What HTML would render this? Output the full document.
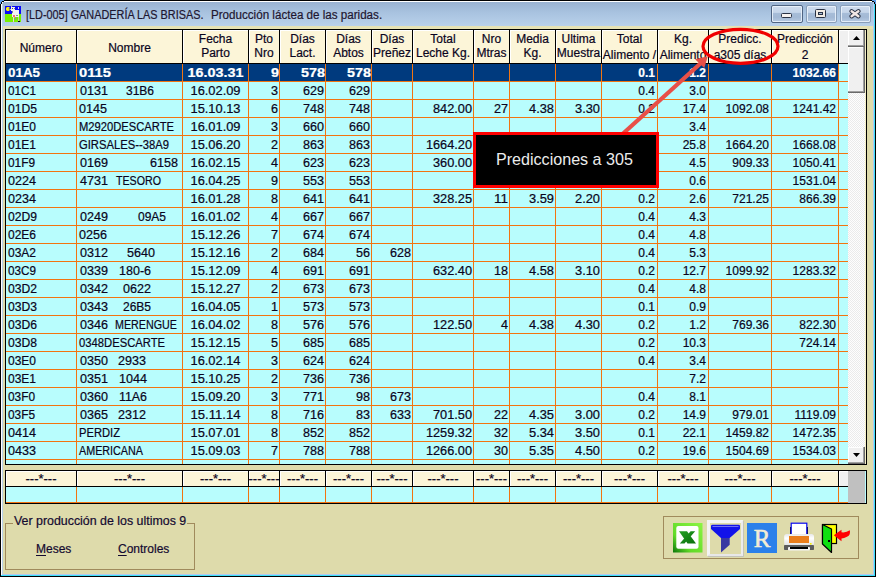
<!DOCTYPE html><html><head><meta charset="utf-8"><style>

*{margin:0;padding:0;box-sizing:border-box}
html,body{width:876px;height:577px;overflow:hidden;background:#dedbab;font-family:"Liberation Sans",sans-serif;position:relative}
.a{position:absolute}
.t{white-space:pre;position:absolute;line-height:14px;-webkit-text-stroke:0.2px currentColor}
.hd{color:#0a0420;font-size:12px}
.dt{color:#140a30;font-size:11.2px}
.da{color:#140a30;font-size:12px}
.sel{color:#fff;font-weight:bold;font-size:12px}
u{text-underline-offset:2px}

</style></head><body>
<div class="a" style="left:0;top:0;width:876px;height:26px;background:linear-gradient(#97b0cf,#a9c3e0 50%,#b9d1ea)"></div>
<div class="a" style="left:0;top:0;width:876px;height:1px;background:#000"></div>
<div class="a" style="left:1;top:1px;left:1px;width:872px;height:1px;background:#fff"></div>
<div class="a" style="left:0;top:0;width:1px;height:577px;background:#000"></div>
<div class="a" style="left:1px;top:1px;width:1px;height:574px;background:#fff"></div>
<div class="a" style="left:2px;top:2px;width:1px;height:572px;background:#b9d1ea"></div>
<div class="a" style="left:873px;top:2px;width:1px;height:573px;background:#b4c8f0"></div>
<div class="a" style="left:874px;top:1px;width:1px;height:575px;background:#3ce0f8"></div>
<div class="a" style="left:875px;top:0;width:1px;height:577px;background:#000"></div>
<div class="a" style="left:2px;top:574px;width:872px;height:1px;background:#b4c8f0"></div>
<div class="a" style="left:1px;top:575px;width:874px;height:1px;background:#3ce0f8"></div>
<div class="a" style="left:0;top:576px;width:876px;height:1px;background:#000"></div>
<div class="a" style="left:0px;top:0px;width:4px;height:1px;background:#5a9ae8"></div>
<div class="a" style="left:0px;top:1px;width:2px;height:1px;background:#5a9ae8"></div>
<div class="a" style="left:0px;top:2px;width:1px;height:2px;background:#5a9ae8"></div>
<div class="a" style="left:2px;top:1px;width:2px;height:1px;background:#000"></div>
<div class="a" style="left:1px;top:2px;width:1px;height:2px;background:#000"></div>
<div class="a" style="left:2px;top:2px;width:1px;height:1px;background:#fff"></div>
<div class="a" style="left:872px;top:0px;width:4px;height:1px;background:#5a9ae8"></div>
<div class="a" style="left:874px;top:1px;width:2px;height:1px;background:#5a9ae8"></div>
<div class="a" style="left:875px;top:2px;width:1px;height:2px;background:#5a9ae8"></div>
<div class="a" style="left:872px;top:1px;width:2px;height:1px;background:#000"></div>
<div class="a" style="left:874px;top:2px;width:1px;height:2px;background:#000"></div>
<div class="a" style="left:3px;top:26px;width:870px;height:3px;background:#e6e2b4"></div>
<svg class="a" style="left:5px;top:6px" width="16" height="16" viewBox="0 0 16 16" shape-rendering="crispEdges">
<rect x="0" y="0" width="16" height="8" fill="#0a0af8"/><rect x="0" y="8" width="16" height="8" fill="#78f000"/>
<path d="M1 2 L2 1 L4 1 L5 2 L3.5 3 L5 3.5 L4 5 L2 5 L1 4 Z" fill="#f8f010" shape-rendering="auto"/>
<rect x="5" y="3" width="2" height="1" fill="#c8c8c8"/>
<rect x="6" y="1" width="4" height="4" fill="#f0f0f0"/><rect x="7" y="2" width="1" height="1" fill="#505050"/><rect x="9" y="2" width="1" height="1" fill="#808080"/>
<rect x="6" y="0" width="1" height="1" fill="#c0c0c0"/><rect x="13" y="1" width="1" height="2" fill="#d0d0d0"/>
<rect x="7" y="4" width="7" height="7" fill="#f4f4f4"/><rect x="7" y="5" width="1" height="2" fill="#8a8a8a"/>
<rect x="11" y="9" width="2" height="1" fill="#909090"/>
<rect x="8" y="9" width="2" height="2" fill="#f07080"/><rect x="9" y="11" width="1" height="1" fill="#f0c020"/>
<rect x="8" y="11" width="1" height="4" fill="#e0e0e0"/><rect x="8" y="15" width="1" height="1" fill="#f0c0d0"/>
<rect x="13" y="11" width="1" height="4" fill="#c0c0c0"/><rect x="13" y="15" width="2" height="1" fill="#101010"/>
<rect x="10" y="11" width="1" height="3" fill="#909090"/>
</svg>
<div class="t" style="left:26px;top:6px;font-size:12px;color:#1e1630;line-height:18px;transform:scaleX(0.905);transform-origin:0 0">[LD-005] GANADERÍA LAS BRISAS.</div>
<div class="t" style="left:210.5px;top:6px;font-size:12px;color:#1e1630;line-height:18px;transform:scaleX(0.968);transform-origin:0 0">Producción láctea de las paridas.</div>
<div class="a" style="left:771px;top:5px;width:32px;height:18px;border:1px solid #4f6482;border-radius:2px;background:linear-gradient(#cfdcee 0,#c6d6ea 40%,#a7bdd8 45%,#a3b9d5 70%,#b6cae2 100%);box-shadow:inset 0 0 0 1px rgba(235,243,252,0.85)"></div>
<div class="a" style="left:781px;top:13px;width:11px;height:5px;background:#f6f2f0;border:1px solid #2a3244;border-radius:1.5px"></div>
<div class="a" style="left:806px;top:5px;width:31px;height:18px;border:1px solid #8a9fba;border-radius:2px;background:linear-gradient(#cfdcee 0,#c6d6ea 40%,#a7bdd8 45%,#a3b9d5 70%,#b6cae2 100%);box-shadow:inset 0 0 0 1px rgba(235,243,252,0.85)"></div>
<div class="a" style="left:815px;top:9px;width:11px;height:9px;background:#f2ece4;border:1.5px solid #2a3244;border-radius:1.5px"></div><div class="a" style="left:818px;top:12px;width:5px;height:3px;background:#a9bdd6;border:1px solid #2a3244"></div>
<div class="a" style="left:840px;top:5px;width:31px;height:18px;border:1px solid #8a9fba;border-radius:2px;background:linear-gradient(#cfdcee 0,#c6d6ea 40%,#a7bdd8 45%,#a3b9d5 70%,#b6cae2 100%);box-shadow:inset 0 0 0 1px rgba(235,243,252,0.85)"></div>
<svg class="a" style="left:848px;top:8px" width="14" height="11" viewBox="0 0 14 11"><path d="M3.6 3.2 L10.4 8.2 M10.4 3.2 L3.6 8.2" stroke="#2a3244" stroke-width="4.4" stroke-linecap="round"/><path d="M3.6 3.2 L10.4 8.2 M10.4 3.2 L3.6 8.2" stroke="#f2e8e6" stroke-width="2.4" stroke-linecap="round"/></svg>
<div class="a" style="left:5px;top:29px;width:862px;height:436px;border:1px solid #000;background:#b8fdfd"></div>
<div class="a" style="left:6px;top:30px;width:832px;height:33px;background:#fcf5d8"></div>
<div class="a" style="left:839px;top:30px;width:9px;height:33px;background:#f0f0f0"></div>
<div class="a" style="left:6px;top:30px;width:842px;height:1px;background:#fff"></div>
<div class="a" style="left:6px;top:63px;width:842px;height:1px;background:#000"></div>
<div class="a" style="left:76px;top:30px;width:1px;height:33px;background:#000"></div>
<div class="a" style="left:77px;top:30px;width:1px;height:33px;background:#fff"></div>
<div class="a" style="left:182px;top:30px;width:1px;height:33px;background:#000"></div>
<div class="a" style="left:183px;top:30px;width:1px;height:33px;background:#fff"></div>
<div class="a" style="left:248px;top:30px;width:1px;height:33px;background:#000"></div>
<div class="a" style="left:249px;top:30px;width:1px;height:33px;background:#fff"></div>
<div class="a" style="left:279px;top:30px;width:1px;height:33px;background:#000"></div>
<div class="a" style="left:280px;top:30px;width:1px;height:33px;background:#fff"></div>
<div class="a" style="left:325px;top:30px;width:1px;height:33px;background:#000"></div>
<div class="a" style="left:326px;top:30px;width:1px;height:33px;background:#fff"></div>
<div class="a" style="left:371px;top:30px;width:1px;height:33px;background:#000"></div>
<div class="a" style="left:372px;top:30px;width:1px;height:33px;background:#fff"></div>
<div class="a" style="left:412px;top:30px;width:1px;height:33px;background:#000"></div>
<div class="a" style="left:413px;top:30px;width:1px;height:33px;background:#fff"></div>
<div class="a" style="left:473px;top:30px;width:1px;height:33px;background:#000"></div>
<div class="a" style="left:474px;top:30px;width:1px;height:33px;background:#fff"></div>
<div class="a" style="left:509px;top:30px;width:1px;height:33px;background:#000"></div>
<div class="a" style="left:510px;top:30px;width:1px;height:33px;background:#fff"></div>
<div class="a" style="left:555px;top:30px;width:1px;height:33px;background:#000"></div>
<div class="a" style="left:556px;top:30px;width:1px;height:33px;background:#fff"></div>
<div class="a" style="left:601px;top:30px;width:1px;height:33px;background:#000"></div>
<div class="a" style="left:602px;top:30px;width:1px;height:33px;background:#fff"></div>
<div class="a" style="left:657px;top:30px;width:1px;height:33px;background:#000"></div>
<div class="a" style="left:658px;top:30px;width:1px;height:33px;background:#fff"></div>
<div class="a" style="left:708px;top:30px;width:1px;height:33px;background:#000"></div>
<div class="a" style="left:709px;top:30px;width:1px;height:33px;background:#fff"></div>
<div class="a" style="left:771px;top:30px;width:1px;height:33px;background:#000"></div>
<div class="a" style="left:772px;top:30px;width:1px;height:33px;background:#fff"></div>
<div class="a" style="left:838px;top:30px;width:1px;height:33px;background:#000"></div>
<div class="a" style="left:839px;top:30px;width:1px;height:33px;background:#fff"></div>
<div class="a" style="left:6px;top:30px;width:1px;height:33px;background:#fff"></div>
<div class="a" style="left:6px;top:64px;width:832px;height:17px;background:#003a7e"></div>
<div class="a" style="left:6px;top:81px;width:842px;height:1px;background:#f27410"></div>
<div class="a" style="left:6px;top:99px;width:842px;height:1px;background:#f27410"></div>
<div class="a" style="left:6px;top:117px;width:842px;height:1px;background:#f27410"></div>
<div class="a" style="left:6px;top:135px;width:842px;height:1px;background:#f27410"></div>
<div class="a" style="left:6px;top:153px;width:842px;height:1px;background:#f27410"></div>
<div class="a" style="left:6px;top:171px;width:842px;height:1px;background:#f27410"></div>
<div class="a" style="left:6px;top:189px;width:842px;height:1px;background:#f27410"></div>
<div class="a" style="left:6px;top:207px;width:842px;height:1px;background:#f27410"></div>
<div class="a" style="left:6px;top:225px;width:842px;height:1px;background:#f27410"></div>
<div class="a" style="left:6px;top:243px;width:842px;height:1px;background:#f27410"></div>
<div class="a" style="left:6px;top:261px;width:842px;height:1px;background:#f27410"></div>
<div class="a" style="left:6px;top:279px;width:842px;height:1px;background:#f27410"></div>
<div class="a" style="left:6px;top:297px;width:842px;height:1px;background:#f27410"></div>
<div class="a" style="left:6px;top:315px;width:842px;height:1px;background:#f27410"></div>
<div class="a" style="left:6px;top:333px;width:842px;height:1px;background:#f27410"></div>
<div class="a" style="left:6px;top:351px;width:842px;height:1px;background:#f27410"></div>
<div class="a" style="left:6px;top:369px;width:842px;height:1px;background:#f27410"></div>
<div class="a" style="left:6px;top:387px;width:842px;height:1px;background:#f27410"></div>
<div class="a" style="left:6px;top:405px;width:842px;height:1px;background:#f27410"></div>
<div class="a" style="left:6px;top:423px;width:842px;height:1px;background:#f27410"></div>
<div class="a" style="left:6px;top:441px;width:842px;height:1px;background:#f27410"></div>
<div class="a" style="left:6px;top:459px;width:842px;height:1px;background:#f27410"></div>
<div class="a" style="left:76px;top:64px;width:1px;height:400px;background:#f27410"></div>
<div class="a" style="left:182px;top:64px;width:1px;height:400px;background:#f27410"></div>
<div class="a" style="left:248px;top:64px;width:1px;height:400px;background:#f27410"></div>
<div class="a" style="left:279px;top:64px;width:1px;height:400px;background:#f27410"></div>
<div class="a" style="left:325px;top:64px;width:1px;height:400px;background:#f27410"></div>
<div class="a" style="left:371px;top:64px;width:1px;height:400px;background:#f27410"></div>
<div class="a" style="left:412px;top:64px;width:1px;height:400px;background:#f27410"></div>
<div class="a" style="left:473px;top:64px;width:1px;height:400px;background:#f27410"></div>
<div class="a" style="left:509px;top:64px;width:1px;height:400px;background:#f27410"></div>
<div class="a" style="left:555px;top:64px;width:1px;height:400px;background:#f27410"></div>
<div class="a" style="left:601px;top:64px;width:1px;height:400px;background:#f27410"></div>
<div class="a" style="left:657px;top:64px;width:1px;height:400px;background:#f27410"></div>
<div class="a" style="left:708px;top:64px;width:1px;height:400px;background:#f27410"></div>
<div class="a" style="left:771px;top:64px;width:1px;height:400px;background:#f27410"></div>
<div class="a" style="left:838px;top:64px;width:1px;height:400px;background:#f27410"></div>
<div class="t hd" style="left:6px;top:41px;width:70px;text-align:center">Número</div>
<div class="t hd" style="left:77px;top:41px;width:105px;text-align:center">Nombre</div>
<div class="t hd" style="left:183px;top:32px;width:65px;text-align:center;overflow:hidden">Fecha</div>
<div class="t hd" style="left:183px;top:46px;width:65px;text-align:center;overflow:hidden">Parto</div>
<div class="t hd" style="left:249px;top:32px;width:30px;text-align:center;overflow:hidden">Pto</div>
<div class="t hd" style="left:249px;top:46px;width:30px;text-align:center;overflow:hidden">Nro</div>
<div class="t hd" style="left:280px;top:32px;width:45px;text-align:center;overflow:hidden">Días</div>
<div class="t hd" style="left:280px;top:46px;width:45px;text-align:center;overflow:hidden">Lact.</div>
<div class="t hd" style="left:326px;top:32px;width:45px;text-align:center;overflow:hidden">Días</div>
<div class="t hd" style="left:326px;top:46px;width:45px;text-align:center;overflow:hidden">Abtos</div>
<div class="t hd" style="left:372px;top:32px;width:40px;text-align:center;overflow:hidden">Días</div>
<div class="t hd" style="left:372px;top:46px;width:40px;text-align:center;overflow:hidden">Preñez</div>
<div class="t hd" style="left:413px;top:32px;width:60px;text-align:center;overflow:hidden">Total</div>
<div class="t hd" style="left:413px;top:46px;width:60px;text-align:center;overflow:hidden">Leche Kg.</div>
<div class="t hd" style="left:474px;top:32px;width:35px;text-align:center;overflow:hidden">Nro</div>
<div class="t hd" style="left:474px;top:46px;width:35px;text-align:center;overflow:hidden">Mtras</div>
<div class="t hd" style="left:510px;top:32px;width:45px;text-align:center;overflow:hidden">Media</div>
<div class="t hd" style="left:510px;top:46px;width:45px;text-align:center;overflow:hidden">Kg.</div>
<div class="t hd" style="left:556px;top:32px;width:45px;text-align:center;overflow:hidden">Ultima</div>
<div class="t hd" style="left:556px;top:46px;width:45px;text-align:center;overflow:hidden">Muestra</div>
<div class="t hd" style="left:602px;top:32px;width:55px;text-align:center;overflow:hidden">Total</div>
<div class="t hd" style="left:602px;top:48px;width:55px;text-align:center;overflow:hidden">Alimento /</div>
<div class="t hd" style="left:658px;top:32px;width:50px;text-align:center;overflow:hidden">Kg.</div>
<div class="t hd" style="left:658px;top:48px;width:50px;text-align:center;overflow:hidden">Alimento</div>
<div class="t hd" style="left:709px;top:32px;width:62px;text-align:center;overflow:hidden">Predicc.</div>
<div class="t hd" style="left:709px;top:48px;width:62px;text-align:center;overflow:hidden">a305 días</div>
<div class="t hd" style="left:772px;top:32px;width:66px;text-align:center;overflow:hidden">Predicción</div>
<div class="t hd" style="left:772px;top:48px;width:66px;text-align:center;overflow:hidden">2</div>
<div class="t" style="left:8px;transform-origin:0 0;transform:scaleX(1.115);top:66px;font-size:12px;font-weight:bold;color:#fff">01A5</div>
<div class="t" style="left:79px;transform-origin:0 0;transform:scaleX(1.229);top:66px;font-size:12px;font-weight:bold;color:#fff">0115</div>
<div class="t" style="left:183px;width:65px;text-align:center;transform-origin:50% 0;transform:scaleX(1.199);top:66px;font-size:12px;font-weight:bold;color:#fff">16.03.31</div>
<div class="t" style="left:249px;width:30px;text-align:right;transform-origin:100% 0;transform:scaleX(1.199);top:66px;font-size:12px;font-weight:bold;color:#fff">9</div>
<div class="t" style="left:280px;width:45px;text-align:right;transform-origin:100% 0;transform:scaleX(1.199);top:66px;font-size:12px;font-weight:bold;color:#fff">578</div>
<div class="t" style="left:326px;width:45px;text-align:right;transform-origin:100% 0;transform:scaleX(1.199);top:66px;font-size:12px;font-weight:bold;color:#fff">578</div>
<div class="t" style="left:602px;width:53px;text-align:right;transform-origin:100% 0;top:66px;font-size:12px;font-weight:bold;color:#fff">0.1</div>
<div class="t" style="left:658px;width:48px;text-align:right;transform-origin:100% 0;top:66px;font-size:12px;font-weight:bold;color:#fff">1.2</div>
<div class="t" style="left:772px;width:64px;text-align:right;transform-origin:100% 0;top:66px;font-size:12px;font-weight:bold;color:#fff">1032.66</div>
<div class="t" style="left:8px;transform-origin:0 0;transform:scaleX(0.976);top:84px;font-size:12px;font-weight:normal;color:#0a0420">01C1</div>
<div class="t" style="left:80px;transform-origin:0 0;transform:scaleX(1.049);top:84px;font-size:12px;font-weight:normal;color:#0a0420">0131</div>
<div class="t" style="left:126px;transform-origin:0 0;top:84px;font-size:12px;font-weight:normal;color:#0a0420">31B6</div>
<div class="t" style="left:183px;width:65px;text-align:center;transform-origin:50% 0;transform:scaleX(1.071);top:84px;font-size:12px;font-weight:normal;color:#0a0420">16.02.09</div>
<div class="t" style="left:249px;width:29px;text-align:right;transform-origin:100% 0;transform:scaleX(1.049);top:84px;font-size:12px;font-weight:normal;color:#0a0420">3</div>
<div class="t" style="left:280px;width:44px;text-align:right;transform-origin:100% 0;transform:scaleX(1.049);top:84px;font-size:12px;font-weight:normal;color:#0a0420">629</div>
<div class="t" style="left:326px;width:44px;text-align:right;transform-origin:100% 0;transform:scaleX(1.049);top:84px;font-size:12px;font-weight:normal;color:#0a0420">629</div>
<div class="t" style="left:602px;width:53px;text-align:right;transform-origin:100% 0;top:84px;font-size:12px;font-weight:normal;color:#0a0420">0.4</div>
<div class="t" style="left:658px;width:48px;text-align:right;transform-origin:100% 0;top:84px;font-size:12px;font-weight:normal;color:#0a0420">3.0</div>
<div class="t" style="left:8px;transform-origin:0 0;transform:scaleX(1.011);top:102px;font-size:12px;font-weight:normal;color:#0a0420">01D5</div>
<div class="t" style="left:79px;transform-origin:0 0;transform:scaleX(1.049);top:102px;font-size:12px;font-weight:normal;color:#0a0420">0145</div>
<div class="t" style="left:183px;width:65px;text-align:center;transform-origin:50% 0;transform:scaleX(1.071);top:102px;font-size:12px;font-weight:normal;color:#0a0420">15.10.13</div>
<div class="t" style="left:249px;width:29px;text-align:right;transform-origin:100% 0;transform:scaleX(1.049);top:102px;font-size:12px;font-weight:normal;color:#0a0420">6</div>
<div class="t" style="left:280px;width:44px;text-align:right;transform-origin:100% 0;transform:scaleX(1.049);top:102px;font-size:12px;font-weight:normal;color:#0a0420">748</div>
<div class="t" style="left:326px;width:44px;text-align:right;transform-origin:100% 0;transform:scaleX(1.049);top:102px;font-size:12px;font-weight:normal;color:#0a0420">748</div>
<div class="t" style="left:413px;width:59px;text-align:right;transform-origin:100% 0;transform:scaleX(1.063);top:102px;font-size:12px;font-weight:normal;color:#0a0420">842.00</div>
<div class="t" style="left:474px;width:34px;text-align:right;transform-origin:100% 0;transform:scaleX(1.049);top:102px;font-size:12px;font-weight:normal;color:#0a0420">27</div>
<div class="t" style="left:510px;width:44px;text-align:right;transform-origin:100% 0;transform:scaleX(1.071);top:102px;font-size:12px;font-weight:normal;color:#0a0420">4.38</div>
<div class="t" style="left:556px;width:44px;text-align:right;transform-origin:100% 0;transform:scaleX(1.071);top:102px;font-size:12px;font-weight:normal;color:#0a0420">3.30</div>
<div class="t" style="left:602px;width:53px;text-align:right;transform-origin:100% 0;top:102px;font-size:12px;font-weight:normal;color:#0a0420">0.2</div>
<div class="t" style="left:658px;width:48px;text-align:right;transform-origin:100% 0;top:102px;font-size:12px;font-weight:normal;color:#0a0420">17.4</div>
<div class="t" style="left:709px;width:60px;text-align:right;transform-origin:100% 0;top:102px;font-size:12px;font-weight:normal;color:#0a0420">1092.08</div>
<div class="t" style="left:772px;width:64px;text-align:right;transform-origin:100% 0;top:102px;font-size:12px;font-weight:normal;color:#0a0420">1241.42</div>
<div class="t" style="left:8px;transform-origin:0 0;top:120px;font-size:12px;font-weight:normal;color:#0a0420">01E0</div>
<div class="t" style="left:79px;transform-origin:0 0;transform:scaleX(0.933);top:120px;font-size:12px;font-weight:normal;color:#0a0420">M2920DESCARTE</div>
<div class="t" style="left:183px;width:65px;text-align:center;transform-origin:50% 0;transform:scaleX(1.071);top:120px;font-size:12px;font-weight:normal;color:#0a0420">16.01.09</div>
<div class="t" style="left:249px;width:29px;text-align:right;transform-origin:100% 0;transform:scaleX(1.049);top:120px;font-size:12px;font-weight:normal;color:#0a0420">3</div>
<div class="t" style="left:280px;width:44px;text-align:right;transform-origin:100% 0;transform:scaleX(1.049);top:120px;font-size:12px;font-weight:normal;color:#0a0420">660</div>
<div class="t" style="left:326px;width:44px;text-align:right;transform-origin:100% 0;transform:scaleX(1.049);top:120px;font-size:12px;font-weight:normal;color:#0a0420">660</div>
<div class="t" style="left:658px;width:48px;text-align:right;transform-origin:100% 0;top:120px;font-size:12px;font-weight:normal;color:#0a0420">3.4</div>
<div class="t" style="left:8px;transform-origin:0 0;top:138px;font-size:12px;font-weight:normal;color:#0a0420">01E1</div>
<div class="t" style="left:79px;transform-origin:0 0;transform:scaleX(0.937);top:138px;font-size:12px;font-weight:normal;color:#0a0420">GIRSALES--38A9</div>
<div class="t" style="left:183px;width:65px;text-align:center;transform-origin:50% 0;transform:scaleX(1.071);top:138px;font-size:12px;font-weight:normal;color:#0a0420">15.06.20</div>
<div class="t" style="left:249px;width:29px;text-align:right;transform-origin:100% 0;transform:scaleX(1.049);top:138px;font-size:12px;font-weight:normal;color:#0a0420">2</div>
<div class="t" style="left:280px;width:44px;text-align:right;transform-origin:100% 0;transform:scaleX(1.049);top:138px;font-size:12px;font-weight:normal;color:#0a0420">863</div>
<div class="t" style="left:326px;width:44px;text-align:right;transform-origin:100% 0;transform:scaleX(1.049);top:138px;font-size:12px;font-weight:normal;color:#0a0420">863</div>
<div class="t" style="left:413px;width:59px;text-align:right;transform-origin:100% 0;transform:scaleX(1.061);top:138px;font-size:12px;font-weight:normal;color:#0a0420">1664.20</div>
<div class="t" style="left:658px;width:48px;text-align:right;transform-origin:100% 0;top:138px;font-size:12px;font-weight:normal;color:#0a0420">25.8</div>
<div class="t" style="left:709px;width:60px;text-align:right;transform-origin:100% 0;top:138px;font-size:12px;font-weight:normal;color:#0a0420">1664.20</div>
<div class="t" style="left:772px;width:64px;text-align:right;transform-origin:100% 0;top:138px;font-size:12px;font-weight:normal;color:#0a0420">1668.08</div>
<div class="t" style="left:8px;transform-origin:0 0;transform:scaleX(0.987);top:156px;font-size:12px;font-weight:normal;color:#0a0420">01F9</div>
<div class="t" style="left:80px;transform-origin:0 0;transform:scaleX(1.049);top:156px;font-size:12px;font-weight:normal;color:#0a0420">0169</div>
<div class="t" style="left:150px;transform-origin:0 0;transform:scaleX(1.049);top:156px;font-size:12px;font-weight:normal;color:#0a0420">6158</div>
<div class="t" style="left:183px;width:65px;text-align:center;transform-origin:50% 0;transform:scaleX(1.071);top:156px;font-size:12px;font-weight:normal;color:#0a0420">16.02.15</div>
<div class="t" style="left:249px;width:29px;text-align:right;transform-origin:100% 0;transform:scaleX(1.049);top:156px;font-size:12px;font-weight:normal;color:#0a0420">4</div>
<div class="t" style="left:280px;width:44px;text-align:right;transform-origin:100% 0;transform:scaleX(1.049);top:156px;font-size:12px;font-weight:normal;color:#0a0420">623</div>
<div class="t" style="left:326px;width:44px;text-align:right;transform-origin:100% 0;transform:scaleX(1.049);top:156px;font-size:12px;font-weight:normal;color:#0a0420">623</div>
<div class="t" style="left:413px;width:59px;text-align:right;transform-origin:100% 0;transform:scaleX(1.063);top:156px;font-size:12px;font-weight:normal;color:#0a0420">360.00</div>
<div class="t" style="left:658px;width:48px;text-align:right;transform-origin:100% 0;top:156px;font-size:12px;font-weight:normal;color:#0a0420">4.5</div>
<div class="t" style="left:709px;width:60px;text-align:right;transform-origin:100% 0;top:156px;font-size:12px;font-weight:normal;color:#0a0420">909.33</div>
<div class="t" style="left:772px;width:64px;text-align:right;transform-origin:100% 0;top:156px;font-size:12px;font-weight:normal;color:#0a0420">1050.41</div>
<div class="t" style="left:8px;transform-origin:0 0;transform:scaleX(1.049);top:174px;font-size:12px;font-weight:normal;color:#0a0420">0224</div>
<div class="t" style="left:80px;transform-origin:0 0;transform:scaleX(1.049);top:174px;font-size:12px;font-weight:normal;color:#0a0420">4731</div>
<div class="t" style="left:116px;transform-origin:0 0;transform:scaleX(0.888);top:174px;font-size:12px;font-weight:normal;color:#0a0420">TESORO</div>
<div class="t" style="left:183px;width:65px;text-align:center;transform-origin:50% 0;transform:scaleX(1.071);top:174px;font-size:12px;font-weight:normal;color:#0a0420">16.04.25</div>
<div class="t" style="left:249px;width:29px;text-align:right;transform-origin:100% 0;transform:scaleX(1.049);top:174px;font-size:12px;font-weight:normal;color:#0a0420">9</div>
<div class="t" style="left:280px;width:44px;text-align:right;transform-origin:100% 0;transform:scaleX(1.049);top:174px;font-size:12px;font-weight:normal;color:#0a0420">553</div>
<div class="t" style="left:326px;width:44px;text-align:right;transform-origin:100% 0;transform:scaleX(1.049);top:174px;font-size:12px;font-weight:normal;color:#0a0420">553</div>
<div class="t" style="left:658px;width:48px;text-align:right;transform-origin:100% 0;top:174px;font-size:12px;font-weight:normal;color:#0a0420">0.6</div>
<div class="t" style="left:772px;width:64px;text-align:right;transform-origin:100% 0;top:174px;font-size:12px;font-weight:normal;color:#0a0420">1531.04</div>
<div class="t" style="left:8px;transform-origin:0 0;transform:scaleX(1.049);top:192px;font-size:12px;font-weight:normal;color:#0a0420">0234</div>
<div class="t" style="left:183px;width:65px;text-align:center;transform-origin:50% 0;transform:scaleX(1.071);top:192px;font-size:12px;font-weight:normal;color:#0a0420">16.01.28</div>
<div class="t" style="left:249px;width:29px;text-align:right;transform-origin:100% 0;transform:scaleX(1.049);top:192px;font-size:12px;font-weight:normal;color:#0a0420">8</div>
<div class="t" style="left:280px;width:44px;text-align:right;transform-origin:100% 0;transform:scaleX(1.049);top:192px;font-size:12px;font-weight:normal;color:#0a0420">641</div>
<div class="t" style="left:326px;width:44px;text-align:right;transform-origin:100% 0;transform:scaleX(1.049);top:192px;font-size:12px;font-weight:normal;color:#0a0420">641</div>
<div class="t" style="left:413px;width:59px;text-align:right;transform-origin:100% 0;transform:scaleX(1.063);top:192px;font-size:12px;font-weight:normal;color:#0a0420">328.25</div>
<div class="t" style="left:474px;width:34px;text-align:right;transform-origin:100% 0;transform:scaleX(1.124);top:192px;font-size:12px;font-weight:normal;color:#0a0420">11</div>
<div class="t" style="left:510px;width:44px;text-align:right;transform-origin:100% 0;transform:scaleX(1.071);top:192px;font-size:12px;font-weight:normal;color:#0a0420">3.59</div>
<div class="t" style="left:556px;width:44px;text-align:right;transform-origin:100% 0;transform:scaleX(1.071);top:192px;font-size:12px;font-weight:normal;color:#0a0420">2.20</div>
<div class="t" style="left:602px;width:53px;text-align:right;transform-origin:100% 0;top:192px;font-size:12px;font-weight:normal;color:#0a0420">0.2</div>
<div class="t" style="left:658px;width:48px;text-align:right;transform-origin:100% 0;top:192px;font-size:12px;font-weight:normal;color:#0a0420">2.6</div>
<div class="t" style="left:709px;width:60px;text-align:right;transform-origin:100% 0;top:192px;font-size:12px;font-weight:normal;color:#0a0420">721.25</div>
<div class="t" style="left:772px;width:64px;text-align:right;transform-origin:100% 0;top:192px;font-size:12px;font-weight:normal;color:#0a0420">866.39</div>
<div class="t" style="left:8px;transform-origin:0 0;transform:scaleX(1.011);top:210px;font-size:12px;font-weight:normal;color:#0a0420">02D9</div>
<div class="t" style="left:80px;transform-origin:0 0;transform:scaleX(1.049);top:210px;font-size:12px;font-weight:normal;color:#0a0420">0249</div>
<div class="t" style="left:138px;transform-origin:0 0;top:210px;font-size:12px;font-weight:normal;color:#0a0420">09A5</div>
<div class="t" style="left:183px;width:65px;text-align:center;transform-origin:50% 0;transform:scaleX(1.071);top:210px;font-size:12px;font-weight:normal;color:#0a0420">16.01.02</div>
<div class="t" style="left:249px;width:29px;text-align:right;transform-origin:100% 0;transform:scaleX(1.049);top:210px;font-size:12px;font-weight:normal;color:#0a0420">4</div>
<div class="t" style="left:280px;width:44px;text-align:right;transform-origin:100% 0;transform:scaleX(1.049);top:210px;font-size:12px;font-weight:normal;color:#0a0420">667</div>
<div class="t" style="left:326px;width:44px;text-align:right;transform-origin:100% 0;transform:scaleX(1.049);top:210px;font-size:12px;font-weight:normal;color:#0a0420">667</div>
<div class="t" style="left:602px;width:53px;text-align:right;transform-origin:100% 0;top:210px;font-size:12px;font-weight:normal;color:#0a0420">0.4</div>
<div class="t" style="left:658px;width:48px;text-align:right;transform-origin:100% 0;top:210px;font-size:12px;font-weight:normal;color:#0a0420">4.3</div>
<div class="t" style="left:8px;transform-origin:0 0;top:228px;font-size:12px;font-weight:normal;color:#0a0420">02E6</div>
<div class="t" style="left:79px;transform-origin:0 0;transform:scaleX(1.049);top:228px;font-size:12px;font-weight:normal;color:#0a0420">0256</div>
<div class="t" style="left:183px;width:65px;text-align:center;transform-origin:50% 0;transform:scaleX(1.071);top:228px;font-size:12px;font-weight:normal;color:#0a0420">15.12.26</div>
<div class="t" style="left:249px;width:29px;text-align:right;transform-origin:100% 0;transform:scaleX(1.049);top:228px;font-size:12px;font-weight:normal;color:#0a0420">7</div>
<div class="t" style="left:280px;width:44px;text-align:right;transform-origin:100% 0;transform:scaleX(1.049);top:228px;font-size:12px;font-weight:normal;color:#0a0420">674</div>
<div class="t" style="left:326px;width:44px;text-align:right;transform-origin:100% 0;transform:scaleX(1.049);top:228px;font-size:12px;font-weight:normal;color:#0a0420">674</div>
<div class="t" style="left:602px;width:53px;text-align:right;transform-origin:100% 0;top:228px;font-size:12px;font-weight:normal;color:#0a0420">0.4</div>
<div class="t" style="left:658px;width:48px;text-align:right;transform-origin:100% 0;top:228px;font-size:12px;font-weight:normal;color:#0a0420">4.8</div>
<div class="t" style="left:8px;transform-origin:0 0;top:246px;font-size:12px;font-weight:normal;color:#0a0420">03A2</div>
<div class="t" style="left:80px;transform-origin:0 0;transform:scaleX(1.049);top:246px;font-size:12px;font-weight:normal;color:#0a0420">0312</div>
<div class="t" style="left:127px;transform-origin:0 0;transform:scaleX(1.049);top:246px;font-size:12px;font-weight:normal;color:#0a0420">5640</div>
<div class="t" style="left:183px;width:65px;text-align:center;transform-origin:50% 0;transform:scaleX(1.071);top:246px;font-size:12px;font-weight:normal;color:#0a0420">15.12.16</div>
<div class="t" style="left:249px;width:29px;text-align:right;transform-origin:100% 0;transform:scaleX(1.049);top:246px;font-size:12px;font-weight:normal;color:#0a0420">2</div>
<div class="t" style="left:280px;width:44px;text-align:right;transform-origin:100% 0;transform:scaleX(1.049);top:246px;font-size:12px;font-weight:normal;color:#0a0420">684</div>
<div class="t" style="left:326px;width:44px;text-align:right;transform-origin:100% 0;transform:scaleX(1.049);top:246px;font-size:12px;font-weight:normal;color:#0a0420">56</div>
<div class="t" style="left:372px;width:39px;text-align:right;transform-origin:100% 0;transform:scaleX(1.049);top:246px;font-size:12px;font-weight:normal;color:#0a0420">628</div>
<div class="t" style="left:602px;width:53px;text-align:right;transform-origin:100% 0;top:246px;font-size:12px;font-weight:normal;color:#0a0420">0.4</div>
<div class="t" style="left:658px;width:48px;text-align:right;transform-origin:100% 0;top:246px;font-size:12px;font-weight:normal;color:#0a0420">5.3</div>
<div class="t" style="left:8px;transform-origin:0 0;transform:scaleX(0.976);top:264px;font-size:12px;font-weight:normal;color:#0a0420">03C9</div>
<div class="t" style="left:80px;transform-origin:0 0;transform:scaleX(1.049);top:264px;font-size:12px;font-weight:normal;color:#0a0420">0339</div>
<div class="t" style="left:119px;transform-origin:0 0;transform:scaleX(1.043);top:264px;font-size:12px;font-weight:normal;color:#0a0420">180-6</div>
<div class="t" style="left:183px;width:65px;text-align:center;transform-origin:50% 0;transform:scaleX(1.071);top:264px;font-size:12px;font-weight:normal;color:#0a0420">15.12.09</div>
<div class="t" style="left:249px;width:29px;text-align:right;transform-origin:100% 0;transform:scaleX(1.049);top:264px;font-size:12px;font-weight:normal;color:#0a0420">4</div>
<div class="t" style="left:280px;width:44px;text-align:right;transform-origin:100% 0;transform:scaleX(1.049);top:264px;font-size:12px;font-weight:normal;color:#0a0420">691</div>
<div class="t" style="left:326px;width:44px;text-align:right;transform-origin:100% 0;transform:scaleX(1.049);top:264px;font-size:12px;font-weight:normal;color:#0a0420">691</div>
<div class="t" style="left:413px;width:59px;text-align:right;transform-origin:100% 0;transform:scaleX(1.063);top:264px;font-size:12px;font-weight:normal;color:#0a0420">632.40</div>
<div class="t" style="left:474px;width:34px;text-align:right;transform-origin:100% 0;transform:scaleX(1.049);top:264px;font-size:12px;font-weight:normal;color:#0a0420">18</div>
<div class="t" style="left:510px;width:44px;text-align:right;transform-origin:100% 0;transform:scaleX(1.071);top:264px;font-size:12px;font-weight:normal;color:#0a0420">4.58</div>
<div class="t" style="left:556px;width:44px;text-align:right;transform-origin:100% 0;transform:scaleX(1.071);top:264px;font-size:12px;font-weight:normal;color:#0a0420">3.10</div>
<div class="t" style="left:602px;width:53px;text-align:right;transform-origin:100% 0;top:264px;font-size:12px;font-weight:normal;color:#0a0420">0.2</div>
<div class="t" style="left:658px;width:48px;text-align:right;transform-origin:100% 0;top:264px;font-size:12px;font-weight:normal;color:#0a0420">12.7</div>
<div class="t" style="left:709px;width:60px;text-align:right;transform-origin:100% 0;top:264px;font-size:12px;font-weight:normal;color:#0a0420">1099.92</div>
<div class="t" style="left:772px;width:64px;text-align:right;transform-origin:100% 0;top:264px;font-size:12px;font-weight:normal;color:#0a0420">1283.32</div>
<div class="t" style="left:8px;transform-origin:0 0;transform:scaleX(1.011);top:282px;font-size:12px;font-weight:normal;color:#0a0420">03D2</div>
<div class="t" style="left:80px;transform-origin:0 0;transform:scaleX(1.049);top:282px;font-size:12px;font-weight:normal;color:#0a0420">0342</div>
<div class="t" style="left:123px;transform-origin:0 0;transform:scaleX(1.049);top:282px;font-size:12px;font-weight:normal;color:#0a0420">0622</div>
<div class="t" style="left:183px;width:65px;text-align:center;transform-origin:50% 0;transform:scaleX(1.071);top:282px;font-size:12px;font-weight:normal;color:#0a0420">15.12.27</div>
<div class="t" style="left:249px;width:29px;text-align:right;transform-origin:100% 0;transform:scaleX(1.049);top:282px;font-size:12px;font-weight:normal;color:#0a0420">2</div>
<div class="t" style="left:280px;width:44px;text-align:right;transform-origin:100% 0;transform:scaleX(1.049);top:282px;font-size:12px;font-weight:normal;color:#0a0420">673</div>
<div class="t" style="left:326px;width:44px;text-align:right;transform-origin:100% 0;transform:scaleX(1.049);top:282px;font-size:12px;font-weight:normal;color:#0a0420">673</div>
<div class="t" style="left:602px;width:53px;text-align:right;transform-origin:100% 0;top:282px;font-size:12px;font-weight:normal;color:#0a0420">0.4</div>
<div class="t" style="left:658px;width:48px;text-align:right;transform-origin:100% 0;top:282px;font-size:12px;font-weight:normal;color:#0a0420">4.8</div>
<div class="t" style="left:8px;transform-origin:0 0;transform:scaleX(1.011);top:300px;font-size:12px;font-weight:normal;color:#0a0420">03D3</div>
<div class="t" style="left:80px;transform-origin:0 0;transform:scaleX(1.049);top:300px;font-size:12px;font-weight:normal;color:#0a0420">0343</div>
<div class="t" style="left:123px;transform-origin:0 0;top:300px;font-size:12px;font-weight:normal;color:#0a0420">26B5</div>
<div class="t" style="left:183px;width:65px;text-align:center;transform-origin:50% 0;transform:scaleX(1.071);top:300px;font-size:12px;font-weight:normal;color:#0a0420">16.04.05</div>
<div class="t" style="left:249px;width:29px;text-align:right;transform-origin:100% 0;transform:scaleX(1.049);top:300px;font-size:12px;font-weight:normal;color:#0a0420">1</div>
<div class="t" style="left:280px;width:44px;text-align:right;transform-origin:100% 0;transform:scaleX(1.049);top:300px;font-size:12px;font-weight:normal;color:#0a0420">573</div>
<div class="t" style="left:326px;width:44px;text-align:right;transform-origin:100% 0;transform:scaleX(1.049);top:300px;font-size:12px;font-weight:normal;color:#0a0420">573</div>
<div class="t" style="left:602px;width:53px;text-align:right;transform-origin:100% 0;top:300px;font-size:12px;font-weight:normal;color:#0a0420">0.1</div>
<div class="t" style="left:658px;width:48px;text-align:right;transform-origin:100% 0;top:300px;font-size:12px;font-weight:normal;color:#0a0420">0.9</div>
<div class="t" style="left:8px;transform-origin:0 0;transform:scaleX(1.011);top:318px;font-size:12px;font-weight:normal;color:#0a0420">03D6</div>
<div class="t" style="left:80px;transform-origin:0 0;transform:scaleX(1.049);top:318px;font-size:12px;font-weight:normal;color:#0a0420">0346</div>
<div class="t" style="left:115px;transform-origin:0 0;transform:scaleX(0.894);top:318px;font-size:12px;font-weight:normal;color:#0a0420">MERENGUE</div>
<div class="t" style="left:183px;width:65px;text-align:center;transform-origin:50% 0;transform:scaleX(1.071);top:318px;font-size:12px;font-weight:normal;color:#0a0420">16.04.02</div>
<div class="t" style="left:249px;width:29px;text-align:right;transform-origin:100% 0;transform:scaleX(1.049);top:318px;font-size:12px;font-weight:normal;color:#0a0420">8</div>
<div class="t" style="left:280px;width:44px;text-align:right;transform-origin:100% 0;transform:scaleX(1.049);top:318px;font-size:12px;font-weight:normal;color:#0a0420">576</div>
<div class="t" style="left:326px;width:44px;text-align:right;transform-origin:100% 0;transform:scaleX(1.049);top:318px;font-size:12px;font-weight:normal;color:#0a0420">576</div>
<div class="t" style="left:413px;width:59px;text-align:right;transform-origin:100% 0;transform:scaleX(1.063);top:318px;font-size:12px;font-weight:normal;color:#0a0420">122.50</div>
<div class="t" style="left:474px;width:34px;text-align:right;transform-origin:100% 0;transform:scaleX(1.049);top:318px;font-size:12px;font-weight:normal;color:#0a0420">4</div>
<div class="t" style="left:510px;width:44px;text-align:right;transform-origin:100% 0;transform:scaleX(1.071);top:318px;font-size:12px;font-weight:normal;color:#0a0420">4.38</div>
<div class="t" style="left:556px;width:44px;text-align:right;transform-origin:100% 0;transform:scaleX(1.071);top:318px;font-size:12px;font-weight:normal;color:#0a0420">4.30</div>
<div class="t" style="left:602px;width:53px;text-align:right;transform-origin:100% 0;top:318px;font-size:12px;font-weight:normal;color:#0a0420">0.2</div>
<div class="t" style="left:658px;width:48px;text-align:right;transform-origin:100% 0;top:318px;font-size:12px;font-weight:normal;color:#0a0420">1.2</div>
<div class="t" style="left:709px;width:60px;text-align:right;transform-origin:100% 0;top:318px;font-size:12px;font-weight:normal;color:#0a0420">769.36</div>
<div class="t" style="left:772px;width:64px;text-align:right;transform-origin:100% 0;top:318px;font-size:12px;font-weight:normal;color:#0a0420">822.30</div>
<div class="t" style="left:8px;transform-origin:0 0;transform:scaleX(1.011);top:336px;font-size:12px;font-weight:normal;color:#0a0420">03D8</div>
<div class="t" style="left:79px;transform-origin:0 0;transform:scaleX(0.937);top:336px;font-size:12px;font-weight:normal;color:#0a0420">0348DESCARTE</div>
<div class="t" style="left:183px;width:65px;text-align:center;transform-origin:50% 0;transform:scaleX(1.071);top:336px;font-size:12px;font-weight:normal;color:#0a0420">15.12.15</div>
<div class="t" style="left:249px;width:29px;text-align:right;transform-origin:100% 0;transform:scaleX(1.049);top:336px;font-size:12px;font-weight:normal;color:#0a0420">5</div>
<div class="t" style="left:280px;width:44px;text-align:right;transform-origin:100% 0;transform:scaleX(1.049);top:336px;font-size:12px;font-weight:normal;color:#0a0420">685</div>
<div class="t" style="left:326px;width:44px;text-align:right;transform-origin:100% 0;transform:scaleX(1.049);top:336px;font-size:12px;font-weight:normal;color:#0a0420">685</div>
<div class="t" style="left:602px;width:53px;text-align:right;transform-origin:100% 0;top:336px;font-size:12px;font-weight:normal;color:#0a0420">0.2</div>
<div class="t" style="left:658px;width:48px;text-align:right;transform-origin:100% 0;top:336px;font-size:12px;font-weight:normal;color:#0a0420">10.3</div>
<div class="t" style="left:772px;width:64px;text-align:right;transform-origin:100% 0;top:336px;font-size:12px;font-weight:normal;color:#0a0420">724.14</div>
<div class="t" style="left:8px;transform-origin:0 0;top:354px;font-size:12px;font-weight:normal;color:#0a0420">03E0</div>
<div class="t" style="left:80px;transform-origin:0 0;transform:scaleX(1.049);top:354px;font-size:12px;font-weight:normal;color:#0a0420">0350</div>
<div class="t" style="left:118px;transform-origin:0 0;transform:scaleX(1.049);top:354px;font-size:12px;font-weight:normal;color:#0a0420">2933</div>
<div class="t" style="left:183px;width:65px;text-align:center;transform-origin:50% 0;transform:scaleX(1.071);top:354px;font-size:12px;font-weight:normal;color:#0a0420">16.02.14</div>
<div class="t" style="left:249px;width:29px;text-align:right;transform-origin:100% 0;transform:scaleX(1.049);top:354px;font-size:12px;font-weight:normal;color:#0a0420">3</div>
<div class="t" style="left:280px;width:44px;text-align:right;transform-origin:100% 0;transform:scaleX(1.049);top:354px;font-size:12px;font-weight:normal;color:#0a0420">624</div>
<div class="t" style="left:326px;width:44px;text-align:right;transform-origin:100% 0;transform:scaleX(1.049);top:354px;font-size:12px;font-weight:normal;color:#0a0420">624</div>
<div class="t" style="left:602px;width:53px;text-align:right;transform-origin:100% 0;top:354px;font-size:12px;font-weight:normal;color:#0a0420">0.4</div>
<div class="t" style="left:658px;width:48px;text-align:right;transform-origin:100% 0;top:354px;font-size:12px;font-weight:normal;color:#0a0420">3.4</div>
<div class="t" style="left:8px;transform-origin:0 0;top:372px;font-size:12px;font-weight:normal;color:#0a0420">03E1</div>
<div class="t" style="left:80px;transform-origin:0 0;transform:scaleX(1.049);top:372px;font-size:12px;font-weight:normal;color:#0a0420">0351</div>
<div class="t" style="left:119px;transform-origin:0 0;transform:scaleX(1.049);top:372px;font-size:12px;font-weight:normal;color:#0a0420">1044</div>
<div class="t" style="left:183px;width:65px;text-align:center;transform-origin:50% 0;transform:scaleX(1.071);top:372px;font-size:12px;font-weight:normal;color:#0a0420">15.10.25</div>
<div class="t" style="left:249px;width:29px;text-align:right;transform-origin:100% 0;transform:scaleX(1.049);top:372px;font-size:12px;font-weight:normal;color:#0a0420">2</div>
<div class="t" style="left:280px;width:44px;text-align:right;transform-origin:100% 0;transform:scaleX(1.049);top:372px;font-size:12px;font-weight:normal;color:#0a0420">736</div>
<div class="t" style="left:326px;width:44px;text-align:right;transform-origin:100% 0;transform:scaleX(1.049);top:372px;font-size:12px;font-weight:normal;color:#0a0420">736</div>
<div class="t" style="left:658px;width:48px;text-align:right;transform-origin:100% 0;top:372px;font-size:12px;font-weight:normal;color:#0a0420">7.2</div>
<div class="t" style="left:8px;transform-origin:0 0;transform:scaleX(0.987);top:390px;font-size:12px;font-weight:normal;color:#0a0420">03F0</div>
<div class="t" style="left:80px;transform-origin:0 0;transform:scaleX(1.049);top:390px;font-size:12px;font-weight:normal;color:#0a0420">0360</div>
<div class="t" style="left:119px;transform-origin:0 0;transform:scaleX(1.032);top:390px;font-size:12px;font-weight:normal;color:#0a0420">11A6</div>
<div class="t" style="left:183px;width:65px;text-align:center;transform-origin:50% 0;transform:scaleX(1.071);top:390px;font-size:12px;font-weight:normal;color:#0a0420">15.09.20</div>
<div class="t" style="left:249px;width:29px;text-align:right;transform-origin:100% 0;transform:scaleX(1.049);top:390px;font-size:12px;font-weight:normal;color:#0a0420">3</div>
<div class="t" style="left:280px;width:44px;text-align:right;transform-origin:100% 0;transform:scaleX(1.049);top:390px;font-size:12px;font-weight:normal;color:#0a0420">771</div>
<div class="t" style="left:326px;width:44px;text-align:right;transform-origin:100% 0;transform:scaleX(1.049);top:390px;font-size:12px;font-weight:normal;color:#0a0420">98</div>
<div class="t" style="left:372px;width:39px;text-align:right;transform-origin:100% 0;transform:scaleX(1.049);top:390px;font-size:12px;font-weight:normal;color:#0a0420">673</div>
<div class="t" style="left:602px;width:53px;text-align:right;transform-origin:100% 0;top:390px;font-size:12px;font-weight:normal;color:#0a0420">0.4</div>
<div class="t" style="left:658px;width:48px;text-align:right;transform-origin:100% 0;top:390px;font-size:12px;font-weight:normal;color:#0a0420">8.1</div>
<div class="t" style="left:8px;transform-origin:0 0;transform:scaleX(0.987);top:408px;font-size:12px;font-weight:normal;color:#0a0420">03F5</div>
<div class="t" style="left:80px;transform-origin:0 0;transform:scaleX(1.049);top:408px;font-size:12px;font-weight:normal;color:#0a0420">0365</div>
<div class="t" style="left:118px;transform-origin:0 0;transform:scaleX(1.049);top:408px;font-size:12px;font-weight:normal;color:#0a0420">2312</div>
<div class="t" style="left:183px;width:65px;text-align:center;transform-origin:50% 0;transform:scaleX(1.092);top:408px;font-size:12px;font-weight:normal;color:#0a0420">15.11.14</div>
<div class="t" style="left:249px;width:29px;text-align:right;transform-origin:100% 0;transform:scaleX(1.049);top:408px;font-size:12px;font-weight:normal;color:#0a0420">8</div>
<div class="t" style="left:280px;width:44px;text-align:right;transform-origin:100% 0;transform:scaleX(1.049);top:408px;font-size:12px;font-weight:normal;color:#0a0420">716</div>
<div class="t" style="left:326px;width:44px;text-align:right;transform-origin:100% 0;transform:scaleX(1.049);top:408px;font-size:12px;font-weight:normal;color:#0a0420">83</div>
<div class="t" style="left:372px;width:39px;text-align:right;transform-origin:100% 0;transform:scaleX(1.049);top:408px;font-size:12px;font-weight:normal;color:#0a0420">633</div>
<div class="t" style="left:413px;width:59px;text-align:right;transform-origin:100% 0;transform:scaleX(1.063);top:408px;font-size:12px;font-weight:normal;color:#0a0420">701.50</div>
<div class="t" style="left:474px;width:34px;text-align:right;transform-origin:100% 0;transform:scaleX(1.049);top:408px;font-size:12px;font-weight:normal;color:#0a0420">22</div>
<div class="t" style="left:510px;width:44px;text-align:right;transform-origin:100% 0;transform:scaleX(1.071);top:408px;font-size:12px;font-weight:normal;color:#0a0420">4.35</div>
<div class="t" style="left:556px;width:44px;text-align:right;transform-origin:100% 0;transform:scaleX(1.071);top:408px;font-size:12px;font-weight:normal;color:#0a0420">3.00</div>
<div class="t" style="left:602px;width:53px;text-align:right;transform-origin:100% 0;top:408px;font-size:12px;font-weight:normal;color:#0a0420">0.2</div>
<div class="t" style="left:658px;width:48px;text-align:right;transform-origin:100% 0;top:408px;font-size:12px;font-weight:normal;color:#0a0420">14.9</div>
<div class="t" style="left:709px;width:60px;text-align:right;transform-origin:100% 0;top:408px;font-size:12px;font-weight:normal;color:#0a0420">979.01</div>
<div class="t" style="left:772px;width:64px;text-align:right;transform-origin:100% 0;top:408px;font-size:12px;font-weight:normal;color:#0a0420">1119.09</div>
<div class="t" style="left:8px;transform-origin:0 0;transform:scaleX(1.049);top:426px;font-size:12px;font-weight:normal;color:#0a0420">0414</div>
<div class="t" style="left:79px;transform-origin:0 0;transform:scaleX(0.932);top:426px;font-size:12px;font-weight:normal;color:#0a0420">PERDIZ</div>
<div class="t" style="left:183px;width:65px;text-align:center;transform-origin:50% 0;transform:scaleX(1.071);top:426px;font-size:12px;font-weight:normal;color:#0a0420">15.07.01</div>
<div class="t" style="left:249px;width:29px;text-align:right;transform-origin:100% 0;transform:scaleX(1.049);top:426px;font-size:12px;font-weight:normal;color:#0a0420">8</div>
<div class="t" style="left:280px;width:44px;text-align:right;transform-origin:100% 0;transform:scaleX(1.049);top:426px;font-size:12px;font-weight:normal;color:#0a0420">852</div>
<div class="t" style="left:326px;width:44px;text-align:right;transform-origin:100% 0;transform:scaleX(1.049);top:426px;font-size:12px;font-weight:normal;color:#0a0420">852</div>
<div class="t" style="left:413px;width:59px;text-align:right;transform-origin:100% 0;transform:scaleX(1.061);top:426px;font-size:12px;font-weight:normal;color:#0a0420">1259.32</div>
<div class="t" style="left:474px;width:34px;text-align:right;transform-origin:100% 0;transform:scaleX(1.049);top:426px;font-size:12px;font-weight:normal;color:#0a0420">32</div>
<div class="t" style="left:510px;width:44px;text-align:right;transform-origin:100% 0;transform:scaleX(1.071);top:426px;font-size:12px;font-weight:normal;color:#0a0420">5.34</div>
<div class="t" style="left:556px;width:44px;text-align:right;transform-origin:100% 0;transform:scaleX(1.071);top:426px;font-size:12px;font-weight:normal;color:#0a0420">3.50</div>
<div class="t" style="left:602px;width:53px;text-align:right;transform-origin:100% 0;top:426px;font-size:12px;font-weight:normal;color:#0a0420">0.1</div>
<div class="t" style="left:658px;width:48px;text-align:right;transform-origin:100% 0;top:426px;font-size:12px;font-weight:normal;color:#0a0420">22.1</div>
<div class="t" style="left:709px;width:60px;text-align:right;transform-origin:100% 0;top:426px;font-size:12px;font-weight:normal;color:#0a0420">1459.82</div>
<div class="t" style="left:772px;width:64px;text-align:right;transform-origin:100% 0;top:426px;font-size:12px;font-weight:normal;color:#0a0420">1472.35</div>
<div class="t" style="left:8px;transform-origin:0 0;transform:scaleX(1.049);top:444px;font-size:12px;font-weight:normal;color:#0a0420">0433</div>
<div class="t" style="left:79px;transform-origin:0 0;transform:scaleX(0.897);top:444px;font-size:12px;font-weight:normal;color:#0a0420">AMERICANA</div>
<div class="t" style="left:183px;width:65px;text-align:center;transform-origin:50% 0;transform:scaleX(1.071);top:444px;font-size:12px;font-weight:normal;color:#0a0420">15.09.03</div>
<div class="t" style="left:249px;width:29px;text-align:right;transform-origin:100% 0;transform:scaleX(1.049);top:444px;font-size:12px;font-weight:normal;color:#0a0420">7</div>
<div class="t" style="left:280px;width:44px;text-align:right;transform-origin:100% 0;transform:scaleX(1.049);top:444px;font-size:12px;font-weight:normal;color:#0a0420">788</div>
<div class="t" style="left:326px;width:44px;text-align:right;transform-origin:100% 0;transform:scaleX(1.049);top:444px;font-size:12px;font-weight:normal;color:#0a0420">788</div>
<div class="t" style="left:413px;width:59px;text-align:right;transform-origin:100% 0;transform:scaleX(1.061);top:444px;font-size:12px;font-weight:normal;color:#0a0420">1266.00</div>
<div class="t" style="left:474px;width:34px;text-align:right;transform-origin:100% 0;transform:scaleX(1.049);top:444px;font-size:12px;font-weight:normal;color:#0a0420">30</div>
<div class="t" style="left:510px;width:44px;text-align:right;transform-origin:100% 0;transform:scaleX(1.071);top:444px;font-size:12px;font-weight:normal;color:#0a0420">5.35</div>
<div class="t" style="left:556px;width:44px;text-align:right;transform-origin:100% 0;transform:scaleX(1.071);top:444px;font-size:12px;font-weight:normal;color:#0a0420">4.50</div>
<div class="t" style="left:602px;width:53px;text-align:right;transform-origin:100% 0;top:444px;font-size:12px;font-weight:normal;color:#0a0420">0.2</div>
<div class="t" style="left:658px;width:48px;text-align:right;transform-origin:100% 0;top:444px;font-size:12px;font-weight:normal;color:#0a0420">19.6</div>
<div class="t" style="left:709px;width:60px;text-align:right;transform-origin:100% 0;top:444px;font-size:12px;font-weight:normal;color:#0a0420">1504.69</div>
<div class="t" style="left:772px;width:64px;text-align:right;transform-origin:100% 0;top:444px;font-size:12px;font-weight:normal;color:#0a0420">1534.03</div>
<div class="a" style="left:848px;top:30px;width:17px;height:434px;background:repeating-conic-gradient(#fefefe 0 25%,#ebebeb 0 50%) 0 0/2px 2px"></div>
<div class="a" style="left:848px;top:30px;width:17px;height:17px;background:#f0f0f0;box-shadow:inset -1px -1px 0 #6a6a6a,inset -2px -2px 0 #a0a0a0,inset 1px 1px 0 #fff"></div>
<svg class="a" style="left:853px;top:36px" width="7" height="4"><path d="M0 4 L3.5 0 L7 4Z" fill="#000"/></svg>
<div class="a" style="left:848px;top:47px;width:17px;height:46px;background:#f0f0f0;box-shadow:inset -1px -1px 0 #6a6a6a,inset -2px -2px 0 #a0a0a0,inset 1px 1px 0 #fff"></div>

<div class="a" style="left:848px;top:447px;width:17px;height:17px;background:#f0f0f0;box-shadow:inset -1px -1px 0 #6a6a6a,inset -2px -2px 0 #a0a0a0,inset 1px 1px 0 #fff"></div>
<svg class="a" style="left:853px;top:453px" width="7" height="4"><path d="M0 0 L3.5 4 L7 0Z" fill="#000"/></svg>
<div class="a" style="left:865px;top:30px;width:1px;height:434px;background:#f4f0c8"></div>
<div class="a" style="left:5px;top:470px;width:862px;height:34px;border:1px solid #000;background:#b8fdfd"></div>
<div class="a" style="left:6px;top:471px;width:832px;height:15px;background:#fcf5d8"></div>
<div class="a" style="left:839px;top:471px;width:9px;height:15px;background:#f0f0f0"></div>
<div class="a" style="left:6px;top:471px;width:842px;height:1px;background:#fff"></div>
<div class="a" style="left:6px;top:486px;width:842px;height:1px;background:#000"></div>
<div class="a" style="left:6px;top:502px;width:842px;height:1px;background:#f27410"></div>
<div class="a" style="left:76px;top:471px;width:1px;height:15px;background:#000"></div>
<div class="a" style="left:77px;top:471px;width:1px;height:15px;background:#fff"></div>
<div class="a" style="left:76px;top:487px;width:1px;height:15px;background:#f27410"></div>
<div class="a" style="left:182px;top:471px;width:1px;height:15px;background:#000"></div>
<div class="a" style="left:183px;top:471px;width:1px;height:15px;background:#fff"></div>
<div class="a" style="left:182px;top:487px;width:1px;height:15px;background:#f27410"></div>
<div class="a" style="left:248px;top:471px;width:1px;height:15px;background:#000"></div>
<div class="a" style="left:249px;top:471px;width:1px;height:15px;background:#fff"></div>
<div class="a" style="left:248px;top:487px;width:1px;height:15px;background:#f27410"></div>
<div class="a" style="left:279px;top:471px;width:1px;height:15px;background:#000"></div>
<div class="a" style="left:280px;top:471px;width:1px;height:15px;background:#fff"></div>
<div class="a" style="left:279px;top:487px;width:1px;height:15px;background:#f27410"></div>
<div class="a" style="left:325px;top:471px;width:1px;height:15px;background:#000"></div>
<div class="a" style="left:326px;top:471px;width:1px;height:15px;background:#fff"></div>
<div class="a" style="left:325px;top:487px;width:1px;height:15px;background:#f27410"></div>
<div class="a" style="left:371px;top:471px;width:1px;height:15px;background:#000"></div>
<div class="a" style="left:372px;top:471px;width:1px;height:15px;background:#fff"></div>
<div class="a" style="left:371px;top:487px;width:1px;height:15px;background:#f27410"></div>
<div class="a" style="left:412px;top:471px;width:1px;height:15px;background:#000"></div>
<div class="a" style="left:413px;top:471px;width:1px;height:15px;background:#fff"></div>
<div class="a" style="left:412px;top:487px;width:1px;height:15px;background:#f27410"></div>
<div class="a" style="left:473px;top:471px;width:1px;height:15px;background:#000"></div>
<div class="a" style="left:474px;top:471px;width:1px;height:15px;background:#fff"></div>
<div class="a" style="left:473px;top:487px;width:1px;height:15px;background:#f27410"></div>
<div class="a" style="left:509px;top:471px;width:1px;height:15px;background:#000"></div>
<div class="a" style="left:510px;top:471px;width:1px;height:15px;background:#fff"></div>
<div class="a" style="left:509px;top:487px;width:1px;height:15px;background:#f27410"></div>
<div class="a" style="left:555px;top:471px;width:1px;height:15px;background:#000"></div>
<div class="a" style="left:556px;top:471px;width:1px;height:15px;background:#fff"></div>
<div class="a" style="left:555px;top:487px;width:1px;height:15px;background:#f27410"></div>
<div class="a" style="left:601px;top:471px;width:1px;height:15px;background:#000"></div>
<div class="a" style="left:602px;top:471px;width:1px;height:15px;background:#fff"></div>
<div class="a" style="left:601px;top:487px;width:1px;height:15px;background:#f27410"></div>
<div class="a" style="left:657px;top:471px;width:1px;height:15px;background:#000"></div>
<div class="a" style="left:658px;top:471px;width:1px;height:15px;background:#fff"></div>
<div class="a" style="left:657px;top:487px;width:1px;height:15px;background:#f27410"></div>
<div class="a" style="left:708px;top:471px;width:1px;height:15px;background:#000"></div>
<div class="a" style="left:709px;top:471px;width:1px;height:15px;background:#fff"></div>
<div class="a" style="left:708px;top:487px;width:1px;height:15px;background:#f27410"></div>
<div class="a" style="left:771px;top:471px;width:1px;height:15px;background:#000"></div>
<div class="a" style="left:772px;top:471px;width:1px;height:15px;background:#fff"></div>
<div class="a" style="left:771px;top:487px;width:1px;height:15px;background:#f27410"></div>
<div class="a" style="left:838px;top:471px;width:1px;height:15px;background:#000"></div>
<div class="a" style="left:839px;top:471px;width:1px;height:15px;background:#fff"></div>
<div class="a" style="left:838px;top:487px;width:1px;height:15px;background:#f27410"></div>
<div class="a" style="left:6px;top:471px;width:1px;height:15px;background:#fff"></div>
<div class="a" style="left:848px;top:471px;width:17px;height:32px;background:#c0c0c0"></div>
<div class="t" style="left:6px;width:70px;text-align:center;transform-origin:50% 0;transform:scaleX(1.081);top:472px;font-size:12px;font-weight:normal;color:#0a0420">---*---</div>
<div class="t" style="left:77px;width:105px;text-align:center;transform-origin:50% 0;transform:scaleX(1.081);top:472px;font-size:12px;font-weight:normal;color:#0a0420">---*---</div>
<div class="t" style="left:183px;width:65px;text-align:center;transform-origin:50% 0;transform:scaleX(1.081);top:472px;font-size:12px;font-weight:normal;color:#0a0420">---*---</div>
<div class="t" style="left:249px;width:30px;text-align:center;transform-origin:50% 0;transform:scaleX(1.081);top:472px;font-size:12px;font-weight:normal;color:#0a0420">---*---</div>
<div class="t" style="left:280px;width:45px;text-align:center;transform-origin:50% 0;transform:scaleX(1.081);top:472px;font-size:12px;font-weight:normal;color:#0a0420">---*---</div>
<div class="t" style="left:326px;width:45px;text-align:center;transform-origin:50% 0;transform:scaleX(1.081);top:472px;font-size:12px;font-weight:normal;color:#0a0420">---*---</div>
<div class="t" style="left:372px;width:40px;text-align:center;transform-origin:50% 0;transform:scaleX(1.081);top:472px;font-size:12px;font-weight:normal;color:#0a0420">---*---</div>
<div class="t" style="left:413px;width:60px;text-align:center;transform-origin:50% 0;transform:scaleX(1.081);top:472px;font-size:12px;font-weight:normal;color:#0a0420">---*---</div>
<div class="t" style="left:474px;width:35px;text-align:center;transform-origin:50% 0;transform:scaleX(1.081);top:472px;font-size:12px;font-weight:normal;color:#0a0420">---*---</div>
<div class="t" style="left:510px;width:45px;text-align:center;transform-origin:50% 0;transform:scaleX(1.081);top:472px;font-size:12px;font-weight:normal;color:#0a0420">---*---</div>
<div class="t" style="left:556px;width:45px;text-align:center;transform-origin:50% 0;transform:scaleX(1.081);top:472px;font-size:12px;font-weight:normal;color:#0a0420">---*---</div>
<div class="t" style="left:602px;width:55px;text-align:center;transform-origin:50% 0;transform:scaleX(1.081);top:472px;font-size:12px;font-weight:normal;color:#0a0420">---*---</div>
<div class="t" style="left:658px;width:50px;text-align:center;transform-origin:50% 0;transform:scaleX(1.081);top:472px;font-size:12px;font-weight:normal;color:#0a0420">---*---</div>
<div class="t" style="left:709px;width:62px;text-align:center;transform-origin:50% 0;transform:scaleX(1.081);top:472px;font-size:12px;font-weight:normal;color:#0a0420">---*---</div>
<div class="t" style="left:772px;width:66px;text-align:center;transform-origin:50% 0;transform:scaleX(1.081);top:472px;font-size:12px;font-weight:normal;color:#0a0420">---*---</div>
<div class="a" style="left:5px;top:523px;width:190px;height:47px;border:1px solid #a08a5c"></div>
<div class="t" style="left:13px;top:513px;font-size:12.4px;color:#140a30;background:#dedbab;padding:0 1px;line-height:16px">Ver producción de los ultimos 9</div>
<div class="t" style="left:36px;top:541px;font-size:12px;color:#140a30;line-height:16px"><u>M</u>eses</div>
<div class="t" style="left:118px;top:541px;font-size:12px;color:#140a30;line-height:16px"><u>C</u>ontroles</div>
<div class="a" style="left:663px;top:516px;width:196px;height:43px;border:1px solid #a08a5c"></div>
<svg class="a" style="left:673px;top:523px" width="30" height="30" viewBox="0 0 30 30">
<defs><linearGradient id="xg" x1="1" y1="0" x2="0" y2="1"><stop offset="0" stop-color="#8cf444"/><stop offset="0.68" stop-color="#62da28"/><stop offset="1" stop-color="#0a760a"/></linearGradient>
<linearGradient id="xg2" x1="0" y1="0" x2="1" y2="1"><stop offset="0" stop-color="#26a026"/><stop offset="1" stop-color="#0a6e0a"/></linearGradient></defs>
<rect x="0" y="0" width="29.5" height="29.5" fill="url(#xg)"/>
<rect x="3.3" y="3" width="22.2" height="22.8" rx="2" fill="#fff"/>
<path d="M6 8.2 L14 8.2 L23 20.6 L14.5 20.6 Z M17.6 8.2 L22.2 8.2 L11.5 20.6 L6.8 20.6 Z" fill="url(#xg2)"/>
</svg>
<div class="a" style="left:707px;top:520px;width:36px;height:36px;background:#dedbab;border-style:solid;border-width:3px 2px 2px 3px;border-color:#f4f4f4 #ececec #e8e8e8 #f4f4f4;box-shadow:1px 1px 0 #c4c4bc"></div>
<svg class="a" style="left:711px;top:524px" width="30" height="30" viewBox="0 0 30 30">
<path d="M0 2.2 Q0 0.8 1.5 0.8 L27.5 0.8 Q29 0.8 29 2.2 L29 5 L18.7 14 L10 14 L0 5 Z" fill="#1212ea"/>
<rect x="1.5" y="2" width="26" height="1" fill="#7070f2"/>
<path d="M10 14 L18.7 14 L18.7 20.8 L10 28.4 Z" fill="#3838a2"/>
</svg>
<div class="a" style="left:747px;top:523px;width:30px;height:30px;background:#2b80ea"></div>
<div class="t" style="left:747px;top:523px;width:30px;height:30px;text-align:center;font-family:'Liberation Serif',serif;font-size:25px;line-height:31px;color:#f2ecd4;-webkit-text-stroke:0.6px #f2ecd4">R</div>
<svg class="a" style="left:780px;top:518px" width="40" height="40" viewBox="0 0 40 40">
<defs><linearGradient id="pb" x1="0" y1="0" x2="0" y2="1"><stop offset="0" stop-color="#e8e8e8"/><stop offset="0.35" stop-color="#ffffff"/><stop offset="1" stop-color="#e0e0e0"/></linearGradient></defs>
<rect x="10" y="9" width="18" height="2" fill="#111"/>
<rect x="10" y="9" width="1.6" height="10" fill="#111"/><rect x="26.4" y="9" width="1.6" height="10" fill="#111"/>
<rect x="11.2" y="5.2" width="15.6" height="14" fill="#fff" stroke="#0808f0" stroke-width="1.2"/>
<rect x="4.2" y="16" width="29.8" height="12" rx="2.5" fill="url(#pb)"/>
<rect x="9" y="18" width="20" height="7" fill="#ea7e1c"/>
<rect x="4" y="27" width="30" height="5" rx="0.8" fill="#5c5c5c"/>
<rect x="8" y="29" width="22" height="3.6" rx="1" fill="#f4f4f4"/>
<rect x="10" y="29" width="18" height="2" fill="#000"/>
<rect x="30" y="25" width="1.6" height="1.6" fill="#f8f000"/>
</svg>
<svg class="a" style="left:820px;top:522px" width="32" height="33" viewBox="0 0 32 33">
<rect x="2.5" y="2.5" width="14" height="19" fill="#ffff00" stroke="#000" stroke-width="1.2"/>
<path d="M2.5 2.5 L11.5 7 L11.5 30.5 L2.5 22 Z" fill="#10e010" stroke="#000" stroke-width="1.2" stroke-linejoin="round"/>
<rect x="8" y="18" width="2" height="2" fill="#000"/>
<path d="M13.8 13.3 L21.5 7.8 L21.5 10.3 Q26 11 29.8 8.3 Q31 13 27 14.8 Q24 16.3 21.5 16.5 L21.5 19.3 Z" fill="#ff0000"/>
</svg>
<svg class="a" style="left:0;top:0" width="876" height="577" viewBox="0 0 876 577">
<ellipse cx="740.5" cy="46.3" rx="37.5" ry="17" fill="none" stroke="#f00000" stroke-width="3.2"/>
<line x1="622" y1="134.5" x2="701" y2="63" stroke="#e85048" stroke-width="4.2"/>
<path d="M707.8 56.3 L695 59.3 L704.3 68 Z" fill="#e85048"/>
</svg>
<div class="a" style="left:473px;top:132px;width:186px;height:56px;background:#000;border:3px solid #ff0000"></div>
<div class="t" style="left:496px;top:149px;font-size:16.1px;line-height:20px;color:#ececec;-webkit-text-stroke:0">Predicciones a 305</div>
</body></html>
